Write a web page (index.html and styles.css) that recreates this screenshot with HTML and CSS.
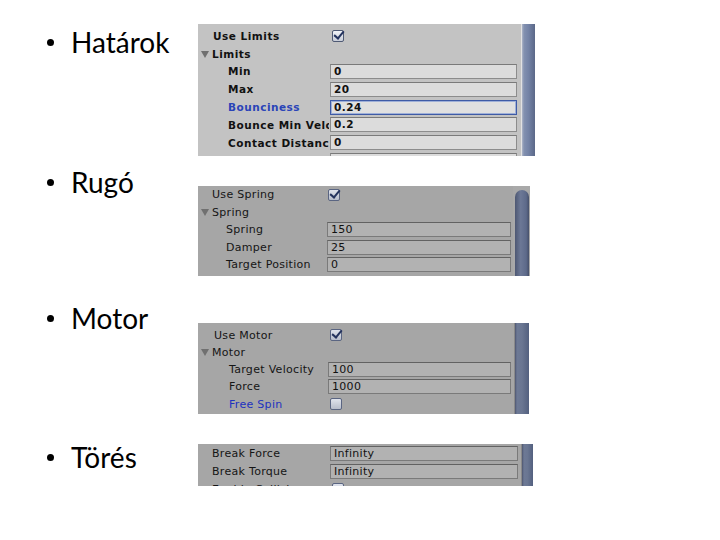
FILE: index.html
```html
<!DOCTYPE html>
<html>
<head>
<meta charset="utf-8">
<link rel="stylesheet" href="styles.css">
</head>
<body>
<div class="slide">
  <section class="item item-limits">
    <div class="label"><span class="dot"></span>Határok</div>
    <div class="panel panel-light">
      <div class="rows">
        <div class="row"><span class="name top">Use Limits</span><span class="check on"></span></div>
        <div class="row"><span class="name fold"><span class="tri"></span>Limits</span></div>
        <div class="row"><span class="name sub">Min</span><span class="field">0</span></div>
        <div class="row"><span class="name sub">Max</span><span class="field">20</span></div>
        <div class="row"><span class="name sub focus">Bounciness</span><span class="field focused">0.24</span></div>
        <div class="row"><span class="name sub">Bounce Min Velocity</span><span class="field">0.2</span></div>
        <div class="row"><span class="name sub">Contact Distance</span><span class="field">0</span></div>
        <div class="row"><span class="name sub"></span><span class="field"></span></div>
      </div>
      <div class="scroll scroll-flat"></div>
    </div>
  </section>

  <section class="item item-spring">
    <div class="label"><span class="dot"></span>Rugó</div>
    <div class="panel panel-dark panel-spring">
      <div class="rows">
        <div class="row"><span class="name top">Use Spring</span><span class="check on"></span></div>
        <div class="row"><span class="name fold"><span class="tri"></span>Spring</span></div>
        <div class="row"><span class="name sub">Spring</span><span class="field">150</span></div>
        <div class="row"><span class="name sub">Damper</span><span class="field">25</span></div>
        <div class="row"><span class="name sub">Target Position</span><span class="field">0</span></div>
      </div>
      <div class="scroll scroll-round"><div class="thumb"></div></div>
    </div>
  </section>

  <section class="item item-motor">
    <div class="label"><span class="dot"></span>Motor</div>
    <div class="panel panel-dark panel-motor">
      <div class="rows">
        <div class="row"><span class="name top">Use Motor</span><span class="check on"></span></div>
        <div class="row"><span class="name fold"><span class="tri"></span>Motor</span></div>
        <div class="row"><span class="name sub">Target Velocity</span><span class="field">100</span></div>
        <div class="row"><span class="name sub">Force</span><span class="field">1000</span></div>
        <div class="row"><span class="name sub focus">Free Spin</span><span class="check"></span></div>
      </div>
      <div class="scroll scroll-flat dark"></div>
    </div>
  </section>

  <section class="item item-break">
    <div class="label"><span class="dot"></span>Törés</div>
    <div class="panel panel-dark panel-break">
      <div class="rows">
        <div class="row"><span class="name top">Break Force</span><span class="field">Infinity</span></div>
        <div class="row"><span class="name top">Break Torque</span><span class="field">Infinity</span></div>
        <div class="row"><span class="name top">Enable Collision</span><span class="check"></span></div>
      </div>
      <div class="scroll scroll-flat dark"></div>
    </div>
  </section>
</div>
</body>
</html>
```

FILE: styles.css
```css
* { box-sizing: border-box; }
html, body { margin: 0; padding: 0; background: #fff; }
body { width: 720px; height: 540px; overflow: hidden; }

.slide { display: flex; flex-direction: column; padding-left: 47px; }

.item { display: flex; align-items: flex-start; }
.label {
  width: 151px;
  display: flex; align-items: center; gap: 17px;
  font-family: Lato, "Open Sans", sans-serif;
  font-size: 28px; line-height: 34px; color: #000;
}
.dot { width: 7px; height: 7px; border-radius: 50%; background: #000; flex: none; }

.item-limits { margin-top: 24px; }
.item-limits .label { margin-top: 1px; }
.item-spring { margin-top: 9px; }
.item-spring .panel { margin-top: 21px; }
.item-motor { margin-top: 25px; }
.item-motor .panel { margin-top: 22px; }
.item-break { margin-top: 26px; }
.item-break .panel { margin-top: 4px; }

.panel { display: flex; overflow: hidden; position: relative; }
.rows { flex: 1; display: flex; flex-direction: column; }
.row { display: flex; align-items: center; height: 18px; flex: none; }
.name {
  overflow: hidden; white-space: nowrap; flex: none;
  color: #111; margin-right: 1px;
}
.field {
  flex: none; height: 15px; line-height: 13px;
  padding-left: 3px; white-space: nowrap; overflow: hidden;
}

/* ----- light panel (Határok) ----- */
.panel-light {
  width: 337px; height: 132px;
  background: #c3c3c3;
  font-family: "DejaVu Sans", Verdana, sans-serif;
  font-weight: bold; font-size: 10.5px; letter-spacing: 0.5px;
}
.panel-light .rows { padding-top: 3px; }
.panel-light .row { height: 17.8px; }
.panel-light .name { width: 131px; }
.panel-light .name.top { padding-left: 15px; }
.panel-light .name.fold { padding-left: 3px; }
.panel-light .name.sub { padding-left: 30px; }
.panel-light .field {
  width: 187px; background: #dcdcdc;
  border: 1px solid #8c8c8c; border-top-color: #7a7a7a; color: #111;
}
.panel-light .field.focused { border-color: #3f5ba6; box-shadow: inset 0 0 0 1px #9fb0d8; background: #e0e0e0; }
.panel-light .name.focus { color: #2a44b8; }
.panel-light .check { margin-left: 2px; }

.tri {
  display: inline-block; width: 0; height: 0; margin-right: 3px;
  border-left: 4px solid transparent; border-right: 4px solid transparent;
  border-top: 7px solid #707070; vertical-align: 0;
}

.check {
  width: 12px; height: 12px; flex: none;
  border: 1px solid #4f5a74; border-radius: 2px;
  background: linear-gradient(#f2f4f8, #c8cdd8);
  position: relative;
}
.check.on::after {
  content: ""; position: absolute; left: 3px; top: -2px;
  width: 4px; height: 8px;
  border: solid #24335e; border-width: 0 2px 2px 0;
  transform: rotate(40deg);
}

.scroll { width: 14px; flex: none; margin-left: 4px; }
.scroll-flat {
  background: linear-gradient(90deg, #aeb6c8 0, #8391b0 2px, #7483a6 50%, #5b6888 100%);
  border-left: 1px solid #e2e2e2;
}
.scroll-flat.dark {
  background: linear-gradient(90deg, #4e5670 0, #6d7995 2px, #6a7692 50%, #53607f 100%);
  border-left: 1px solid #8a8a8a;
}

/* ----- dark panels ----- */
.panel-dark {
  background: #a6a6a6;
  font-family: "DejaVu Sans", Verdana, sans-serif;
  font-size: 11px; letter-spacing: 0.3px;
}
.panel-dark .name { color: #151515; }
.panel-dark .name.focus { color: #1d32c0; }
.panel-dark .field {
  background: #b2b2b2; border: 1px solid #7a7a7a; border-top-color: #626262;
  color: #111;
}
.panel-dark .check { border-color: #5a6582; background: linear-gradient(#dfe3ec, #b7bdcb); }

.panel-spring { width: 332px; height: 90px; }
.panel-spring .row { height: 17.5px; }
.panel-spring .name { width: 128px; }
.panel-spring .name.top { padding-left: 14px; }
.panel-spring .name.fold { padding-left: 3px; }
.panel-spring .name.sub { padding-left: 28px; }
.panel-spring .field { width: 184px; }
.panel-spring .check { margin-left: 1px; }
.scroll-round { margin-left: 2px; width: 17px; background: #a9a9a9; padding: 4px 1px 0 2px; }
.thumb {
  height: 120px; border-radius: 7px 7px 0 0;
  background: linear-gradient(90deg, #4d5772 0, #6c7896 40%, #5d6a8a 80%, #46506a 100%);
}

.panel-motor { width: 331px; height: 91px; }
.panel-motor .rows { padding-top: 3.5px; }
.panel-motor .row { height: 17.25px; }
.panel-motor .name { width: 129px; }
.panel-motor .name.top { padding-left: 16px; }
.panel-motor .name.fold { padding-left: 3px; }
.panel-motor .name.sub { padding-left: 31px; }
.panel-motor .field { width: 183px; }
.panel-motor .check { margin-left: 2px; }
.panel-motor .scroll { margin-left: 3px; width: 15px; }

.panel-break { width: 335px; height: 42px; }
.panel-break .name { width: 131px; }
.panel-break .name.top { padding-left: 14px; }
.panel-break .field { width: 188px; }
.panel-break .check { margin-left: 2px; }
.panel-break .scroll { margin-left: 3px; width: 12px; }
```
